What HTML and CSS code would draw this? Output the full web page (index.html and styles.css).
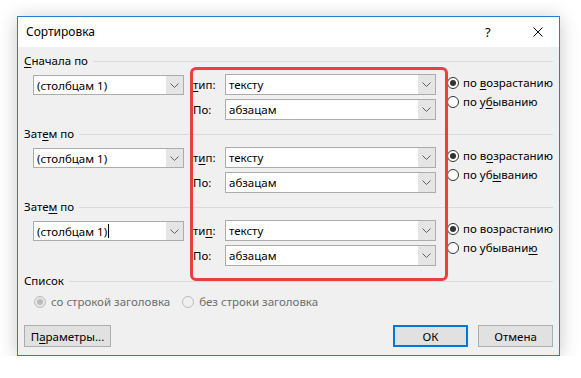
FILE: index.html
```html
<!DOCTYPE html>
<html lang="ru">
<head>
    <meta charset="UTF-8">
    <meta name="viewport" content="width=device-width, initial-scale=1.0">
    <title>Сортировка</title>
    <link rel="stylesheet" href="styles.css">
</head>
<body>
    <div class="dialog">
        <!-- Title bar -->
        <div class="titlebar">
            <span class="title">Сортировка</span>
            <span class="help">?</span>
            <span class="close">
                <svg width="10" height="10" viewBox="0 0 10 10"><path d="M0.5 0.5 L9.5 9.5 M9.5 0.5 L0.5 9.5" stroke="#000" stroke-width="1" fill="none"/></svg>
            </span>
        </div>

        <div class="content">
            <!-- First level -->
            <div class="section">
                <div class="group-header"><span><u>С</u>начала по</span><i class="rule"></i></div>
                <div class="sort-row">
                    <div class="combo combo-column">
                        <span class="combo-value">(столбцам 1)</span>
                        <span class="combo-btn"><svg width="9" height="5" viewBox="0 0 9 5"><polyline points="0.5,0.5 4.5,4.5 8.5,0.5" fill="none" stroke="#606060"/></svg></span>
                    </div>
                    <div class="sort-fields">
                        <div class="field">
                            <span class="field-label"><u>т</u>ип:</span>
                            <div class="combo combo-wide">
                                <span class="combo-value">тексту</span>
                                <span class="combo-btn"><svg width="9" height="5" viewBox="0 0 9 5"><polyline points="0.5,0.5 4.5,4.5 8.5,0.5" fill="none" stroke="#606060"/></svg></span>
                            </div>
                        </div>
                        <div class="field">
                            <span class="field-label">По:</span>
                            <div class="combo combo-wide">
                                <span class="combo-value">абзацам</span>
                                <span class="combo-btn"><svg width="9" height="5" viewBox="0 0 9 5"><polyline points="0.5,0.5 4.5,4.5 8.5,0.5" fill="none" stroke="#606060"/></svg></span>
                            </div>
                        </div>
                    </div>
                    <div class="order">
                        <div class="radio checked"><i class="dot"></i><span>по <u>в</u>озрастанию</span></div>
                        <div class="radio"><i class="dot"></i><span>по у<u>б</u>ыванию</span></div>
                    </div>
                </div>
            </div>

            <!-- Second level -->
            <div class="section">
                <div class="group-header"><span>Зат<u>е</u>м по</span><i class="rule"></i></div>
                <div class="sort-row">
                    <div class="combo combo-column">
                        <span class="combo-value">(столбцам 1)</span>
                        <span class="combo-btn"><svg width="9" height="5" viewBox="0 0 9 5"><polyline points="0.5,0.5 4.5,4.5 8.5,0.5" fill="none" stroke="#606060"/></svg></span>
                    </div>
                    <div class="sort-fields">
                        <div class="field">
                            <span class="field-label">т<u>и</u>п:</span>
                            <div class="combo combo-wide">
                                <span class="combo-value">тексту</span>
                                <span class="combo-btn"><svg width="9" height="5" viewBox="0 0 9 5"><polyline points="0.5,0.5 4.5,4.5 8.5,0.5" fill="none" stroke="#606060"/></svg></span>
                            </div>
                        </div>
                        <div class="field">
                            <span class="field-label">По:</span>
                            <div class="combo combo-wide">
                                <span class="combo-value">абзацам</span>
                                <span class="combo-btn"><svg width="9" height="5" viewBox="0 0 9 5"><polyline points="0.5,0.5 4.5,4.5 8.5,0.5" fill="none" stroke="#606060"/></svg></span>
                            </div>
                        </div>
                    </div>
                    <div class="order">
                        <div class="radio checked"><i class="dot"></i><span>по в<u>о</u>зрастанию</span></div>
                        <div class="radio"><i class="dot"></i><span>по уб<u>ы</u>ванию</span></div>
                    </div>
                </div>
            </div>

            <!-- Third level -->
            <div class="section">
                <div class="group-header"><span>Зате<u>м</u> по</span><i class="rule"></i></div>
                <div class="sort-row">
                    <div class="combo combo-column">
                        <span class="combo-value">(столбцам 1)<i class="caret"></i></span>
                        <span class="combo-btn"><svg width="9" height="5" viewBox="0 0 9 5"><polyline points="0.5,0.5 4.5,4.5 8.5,0.5" fill="none" stroke="#606060"/></svg></span>
                    </div>
                    <div class="sort-fields">
                        <div class="field">
                            <span class="field-label">ти<u>п</u>:</span>
                            <div class="combo combo-wide">
                                <span class="combo-value">тексту</span>
                                <span class="combo-btn"><svg width="9" height="5" viewBox="0 0 9 5"><polyline points="0.5,0.5 4.5,4.5 8.5,0.5" fill="none" stroke="#606060"/></svg></span>
                            </div>
                        </div>
                        <div class="field">
                            <span class="field-label">По:</span>
                            <div class="combo combo-wide">
                                <span class="combo-value">абзацам</span>
                                <span class="combo-btn"><svg width="9" height="5" viewBox="0 0 9 5"><polyline points="0.5,0.5 4.5,4.5 8.5,0.5" fill="none" stroke="#606060"/></svg></span>
                            </div>
                        </div>
                    </div>
                    <div class="order">
                        <div class="radio checked"><i class="dot"></i><span>по возрастанию</span></div>
                        <div class="radio"><i class="dot"></i><span>по убывани<u>ю</u></span></div>
                    </div>
                </div>
            </div>

            <!-- List options -->
            <div class="section list-section">
                <div class="group-header"><span>Список</span><i class="rule"></i></div>
                <div class="list-options">
                    <div class="radio checked disabled"><i class="dot"></i><span>со строкой заголовка</span></div>
                    <div class="radio disabled"><i class="dot"></i><span>без строки заголовка</span></div>
                </div>
            </div>

            <!-- Buttons -->
            <div class="buttons">
                <button class="btn btn-params">П<u>а</u>раметры...</button>
                <span class="spacer"></span>
                <button class="btn btn-ok">ОК</button>
                <button class="btn">Отмена</button>
            </div>
        </div>

        <!-- Red highlight frame -->
        <div class="highlight"></div>
    </div>
</body>
</html>
```

FILE: styles.css
```css
/* General */
body {
    margin: 0;
    background-color: #ffffff;
    font-family: "Segoe UI", "Noto Sans", sans-serif;
    font-size: 11.5px;
    color: #000000;
}

u {
    text-decoration: underline;
    text-underline-offset: 2px;
}

/* Dialog window */
.dialog {
    position: relative;
    box-sizing: border-box;
    width: 543px;
    height: 340px;
    margin: 16px 0 0 17px;
    border: 1px solid #2b7bd2;
    background-color: #f0f0f0;
    box-shadow: 0 2px 18px rgba(0, 0, 0, 0.22);
}

.titlebar {
    display: flex;
    align-items: center;
    height: 30px;
    background-color: #ffffff;
    padding-left: 8px;
}

.title {
    flex: 1;
    line-height: 30px;
    font-size: 12px;
}

.help {
    width: 10px;
    margin-right: 38px;
    font-size: 13px;
}

.close {
    display: flex;
    margin-right: 16px;
}

.content {
    padding: 7px 6px 8px 6px;
}

/* Group headers */
.group-header {
    display: flex;
    align-items: center;
    height: 14px;
    line-height: 14px;
}

.rule {
    flex: 1;
    height: 1px;
    margin-left: 5px;
    background-color: #dadada;
}

.section + .section {
    margin-top: 7px;
}

.sort-row {
    display: flex;
    align-items: flex-start;
    margin-top: 6px;
    padding-left: 9px;
}

/* Combo boxes */
.combo {
    box-sizing: border-box;
    display: flex;
    flex-shrink: 0;
    height: 21px;
    border: 1px solid #acacac;
    background-color: #ffffff;
}

.combo-column {
    width: 151px;
    height: 20px;
    margin-top: 1px;
}

.combo-wide {
    width: 211px;
}

.combo-value {
    flex: 1;
    display: flex;
    align-items: center;
    padding-left: 3px;
    white-space: nowrap;
}

.caret {
    display: inline-block;
    width: 1px;
    height: 14px;
    margin-left: 1px;
    background-color: #000000;
}

.combo-btn {
    display: flex;
    align-items: center;
    justify-content: center;
    width: 17px;
    background-color: #e5e5e5;
}

.sort-fields {
    display: flex;
    flex-direction: column;
    flex-shrink: 0;
    gap: 4px;
    margin-left: 9px;
}

.field {
    display: flex;
    align-items: center;
}

.field-label {
    width: 32px;
}

/* Radio buttons */
.order {
    display: flex;
    flex-direction: column;
    margin-left: 11px;
    margin-top: -1px;
}

.radio {
    display: flex;
    align-items: center;
    height: 19px;
    white-space: nowrap;
}

.radio .dot {
    position: relative;
    box-sizing: border-box;
    flex-shrink: 0;
    width: 12px;
    height: 12px;
    margin-right: 4px;
    border: 1px solid #333333;
    border-radius: 50%;
    background-color: #ffffff;
}

.radio.checked .dot::after {
    content: "";
    position: absolute;
    left: 2px;
    top: 2px;
    width: 6px;
    height: 6px;
    border-radius: 50%;
    background-color: #333333;
}

.radio.disabled {
    color: #6d6d6d;
}

.radio.disabled .dot {
    border-color: #bcbcbc;
    background-color: #f0f0f0;
}

.radio.disabled.checked .dot {
    background-color: #e6e6e6;
}

.radio.disabled.checked .dot::after {
    background-color: #bcbcbc;
}

/* List section */
.list-section {
    margin-top: 8px !important;
}

.list-options {
    display: flex;
    gap: 12px;
    margin-top: 4px;
    padding-left: 10px;
}

.list-options .radio .dot {
    margin-right: 5px;
}

/* Buttons */
.buttons {
    display: flex;
    gap: 10px;
    margin-top: 14px;
}

.spacer {
    flex: 1;
}

.btn {
    box-sizing: border-box;
    width: 75px;
    height: 22px;
    padding: 0;
    border: 1px solid #adadad;
    background-color: #e1e1e1;
    font-family: inherit;
    font-size: 11.5px;
    color: #000000;
}

.btn-params {
    width: 87px;
}

.btn-ok {
    border: 2px solid #0078d7;
}

/* Red highlight frame */
.highlight {
    position: absolute;
    left: 172px;
    top: 50px;
    box-sizing: border-box;
    width: 258px;
    height: 214px;
    border: 3px solid #e8403a;
    border-radius: 6px;
}
```
